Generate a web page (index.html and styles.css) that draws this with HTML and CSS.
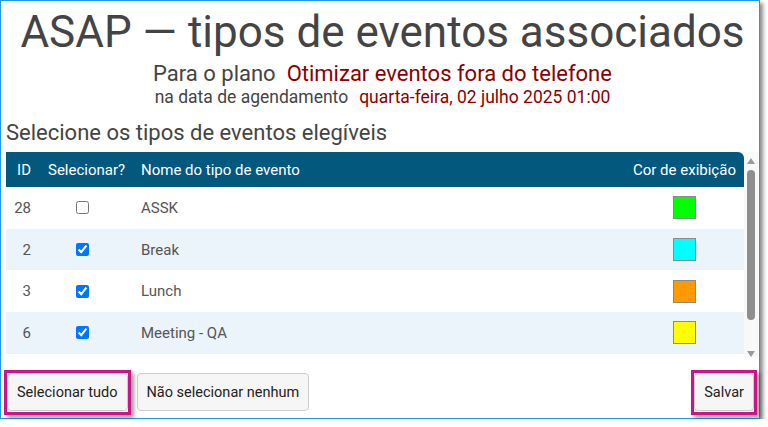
FILE: index.html
```html
<!DOCTYPE html>
<html lang="pt">
<head>
<meta charset="utf-8">
<title>ASAP — tipos de eventos associados</title>
<link rel="stylesheet" href="styles.css">
</head>
<body>
<div class="frame">
  <h1 class="title">ASAP — tipos de eventos associados</h1>
  <div class="sub sub-plan"><span>Para o plano</span><span class="hl">Otimizar eventos fora do telefone</span></div>
  <div class="sub sub-date"><span>na data de agendamento</span><span class="hl">quarta-feira, 02 julho 2025 01:00</span></div>
  <h2 class="section">Selecione os tipos de eventos elegíveis</h2>
  <div class="grid-wrap">
    <div class="table-area">
      <table class="events">
        <colgroup>
          <col class="c-id"><col class="c-sel"><col class="c-name"><col class="c-color">
        </colgroup>
        <thead>
          <tr><th class="id">ID</th><th class="sel">Selecionar?</th><th class="name">Nome do tipo de evento</th><th class="color">Cor de exibição</th></tr>
        </thead>
        <tbody>
          <tr><td class="id">28</td><td class="sel"><input type="checkbox"></td><td class="name">ASSK</td><td class="color"><span class="swatch green"></span></td></tr>
          <tr><td class="id">2</td><td class="sel"><input type="checkbox" checked></td><td class="name">Break</td><td class="color"><span class="swatch cyan"></span></td></tr>
          <tr><td class="id">3</td><td class="sel"><input type="checkbox" checked></td><td class="name">Lunch</td><td class="color"><span class="swatch orange"></span></td></tr>
          <tr><td class="id">6</td><td class="sel"><input type="checkbox" checked></td><td class="name">Meeting - QA</td><td class="color"><span class="swatch yellow"></span></td></tr>
        </tbody>
      </table>
    </div>
    <div class="scrollbar">
      <span class="arrow up"></span>
      <span class="thumb"></span>
      <span class="fill"></span>
      <span class="arrow down"></span>
    </div>
  </div>
  <div class="actions">
    <span class="mark"><button class="btn">Selecionar tudo</button></span>
    <button class="btn">Não selecionar nenhum</button>
    <span class="spacer"></span>
    <span class="mark"><button class="btn">Salvar</button></span>
  </div>
</div>
</body>
</html>
```
FILE: styles.css
```css
html, body {
  margin: 0;
  padding: 0;
  background: #ffffff;
}
body {
  font-family: Roboto, "Liberation Sans", sans-serif;
  color: #444444;
}
.frame {
  box-sizing: border-box;
  width: 760px;
  height: 419px;
  border: 1px solid #1f97ee;
  box-shadow: 3px 3px 4px rgba(0, 0, 0, 0.45);
  padding: 5px 0 0 5px;
  display: flex;
  flex-direction: column;
  background: #ffffff;
}
.title {
  margin: 0;
  font-size: 44px;
  line-height: 52px;
  font-weight: 400;
  text-align: center;
  white-space: nowrap;
  color: #444444;
}
.sub {
  display: flex;
  justify-content: center;
  gap: 11px;
  color: #444444;
  white-space: nowrap;
}
.sub-plan {
  margin-top: 3px;
  font-size: 22px;
  line-height: 26px;
}
.sub-date {
  font-size: 17.5px;
  line-height: 21px;
}
.hl {
  color: #8b0000;
}
.section {
  margin: 12px 0 0 0;
  font-size: 22px;
  line-height: 26px;
  font-weight: 400;
  color: #444444;
}
.grid-wrap {
  margin-top: 6px;
  height: 206px;
  flex: none;
  display: flex;
}
.table-area {
  width: 738px;
  overflow: hidden;
}
.events {
  width: 738px;
  border-collapse: collapse;
  table-layout: fixed;
  font-size: 15px;
}
.c-id { width: 34px; }
.c-sel { width: 93px; }
.c-color { width: 119px; }
.events thead tr {
  background: #03587e;
  height: 35px;
}
.events th {
  color: #ffffff;
  font-weight: 400;
  padding: 0 8px;
  text-align: left;
  white-space: nowrap;
}
.events th.color {
  border-top-right-radius: 6px;
}
.events tbody tr {
  height: 41.7px;
}
.events tbody tr:nth-child(even) {
  background: #ebf3fb;
}
.events td {
  color: #555555;
  padding: 0 8px;
  vertical-align: middle;
}
.events .id {
  text-align: right;
  padding-right: 9px;
  padding-left: 0;
}
.events td.sel {
  text-align: center;
  padding: 0 8px 0 0;
}
.events td.sel input {
  margin: 4px 0 0 0;
  width: 13px;
  height: 13px;
}
.events .color {
  text-align: center;
  padding-right: 9px;
}
.swatch {
  display: inline-block;
  width: 21px;
  height: 21px;
  border: 1px solid #8a8a8a;
  vertical-align: middle;
}
.green { background: #00ff00; }
.cyan { background: #00ffff; }
.orange { background: #ff9900; }
.yellow { background: #ffff00; }
.scrollbar {
  width: 14px;
  background: #f8f8f8;
  display: flex;
  flex-direction: column;
  align-items: center;
  padding: 6px 0 1px 0;
  box-sizing: border-box;
}
.arrow {
  width: 0;
  height: 0;
  border-left: 4px solid transparent;
  border-right: 4px solid transparent;
}
.arrow.up {
  border-bottom: 6px solid #9a9a9a;
}
.arrow.down {
  border-top: 6px solid #9a9a9a;
}
.thumb {
  margin-top: 6px;
  width: 8px;
  height: 150px;
  border-radius: 4px;
  background: #8e8e8e;
}
.fill {
  flex: 1;
}
.actions {
  margin: 12px 0 0 -2px;
  display: flex;
  align-items: flex-start;
  gap: 6px;
  padding-right: 2px;
}
.spacer {
  flex: 1;
}
.mark {
  display: flex;
  padding: 0 0 1px 0;
  border: 3px solid #c8168a;
  box-shadow: 3px 3px 4px rgba(0, 0, 0, 0.4);
}
.actions > .btn {
  margin-top: 3px;
}
.btn {
  height: 38px;
  padding: 0 9px;
  font-family: Roboto, "Liberation Sans", sans-serif;
  font-size: 14.5px;
  color: #222222;
  background: #f6f6f6;
  border: 1px solid #cccccc;
  border-radius: 4px;
}
```
